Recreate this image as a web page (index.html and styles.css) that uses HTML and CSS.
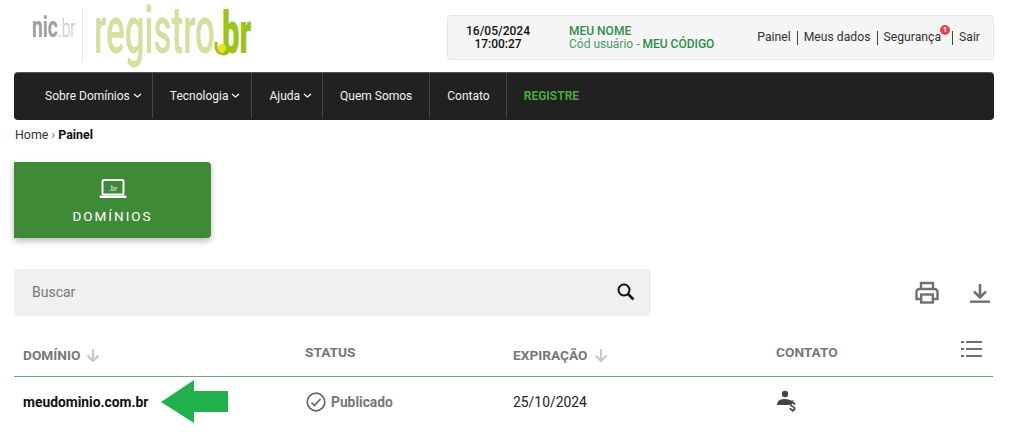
FILE: index.html
```html
<!DOCTYPE html>
<html lang="pt-BR">
<head>
<meta charset="utf-8">
<title>Registro.br - Painel</title>
<link rel="stylesheet" href="styles.css">
</head>
<body>
<div class="page">
  <header class="top">
    <svg class="logo" width="224" height="58" viewBox="0 0 224 58" aria-label="nic.br registro.br">
      <text class="logo-nic" transform="translate(2 31) scale(.66 1)">nic</text>
      <text class="logo-nicbr" transform="translate(28 31) scale(.62 1)">.br</text>
      <rect x="52" y="3" width="1" height="53" fill="#e4e4e4"/>
      <text class="logo-reg" transform="translate(64 47) scale(.53 1)">registro</text>
      <text class="logo-br" transform="translate(192 47) scale(.52 1)">br</text>
      <path d="M186 36v5a7 7 0 0 0 7 7 7 7 0 0 0 6-3" fill="none" stroke="#9bc31c" stroke-width="3"/>
      <circle cx="192" cy="42" r="4" fill="#f0e020"/>
    </svg>
    <div class="userbox">
      <div class="clock">16/05/2024<br>17:00:27</div>
      <div class="who">
        <div class="who-name">MEU NOME</div>
        <div class="who-code">Cód usuário - <b>MEU CÓDIGO</b></div>
      </div>
      <div class="links">
        <a>Painel</a><i></i><a>Meus dados</a><i></i><a class="sec">Segurança<span class="badge">1</span></a><i></i><a>Sair</a>
      </div>
    </div>
  </header>

  <nav class="nav">
    <a class="nav-item has-sub first">Sobre Domínios<svg class="chev" width="9" height="5" viewBox="0 0 9 5"><path d="M1 1l3.500 3L8 1" fill="none" stroke="#fff" stroke-width="1.200"/></svg></a>
    <a class="nav-item has-sub">Tecnologia<svg class="chev" width="9" height="5" viewBox="0 0 9 5"><path d="M1 1l3.500 3L8 1" fill="none" stroke="#fff" stroke-width="1.200"/></svg></a>
    <a class="nav-item has-sub tight">Ajuda<svg class="chev" width="9" height="5" viewBox="0 0 9 5"><path d="M1 1l3.500 3L8 1" fill="none" stroke="#fff" stroke-width="1.200"/></svg></a>
    <a class="nav-item">Quem Somos</a>
    <a class="nav-item tight-end">Contato</a>
    <a class="nav-item last">REGISTRE</a>
  </nav>

  <div class="crumbs">Home <span class="sep">›</span> <b>Painel</b></div>

  <a class="card">
    <svg width="28" height="20" viewBox="0 0 28 20">
      <rect x="3.500" y="1" width="21" height="14.500" rx="1.500" fill="none" stroke="#fff" stroke-width="2"/>
      <rect x="0.500" y="16.500" width="27" height="2.500" rx="1" fill="#fff"/>
      <text class="card-br" x="14" y="11.500" text-anchor="middle">.br</text>
    </svg>
    <span class="card-label">DOMÍNIOS</span>
  </a>

  <div class="tools">
    <div class="search">
      <span>Buscar</span>
      <svg width="20" height="20" viewBox="0 0 20 20"><circle cx="8" cy="8" r="5.500" fill="none" stroke="#111" stroke-width="2"/><path d="M12 12l5.500 5.500" stroke="#111" stroke-width="2.600"/></svg>
    </div>
    <div class="tool-icons">
      <svg width="24" height="24" viewBox="0 0 24 24"><path d="M6 8V2h12v6M6 18H1.500v-7a3 3 0 0 1 3-3h15a3 3 0 0 1 3 3v7H18" fill="none" stroke="#707070" stroke-width="2.400"/><rect x="6.200" y="13.500" width="11.600" height="8" fill="none" stroke="#707070" stroke-width="2.400"/><circle cx="19" cy="11" r="1" fill="#fff"/></svg>
      <svg width="20" height="24" viewBox="0 0 20 24"><path d="M10 3v13M4 10.500l6 6 6-6" fill="none" stroke="#707070" stroke-width="2.600"/><rect x="0" y="19.500" width="20" height="2.400" fill="#707070"/></svg>
    </div>
  </div>

  <div class="thead">
    <div class="th low">DOMÍNIO<svg class="sort" width="14" height="15" viewBox="0 0 14 15"><path d="M7 1v12M1.500 7.500L7 13l5.500-5.500" fill="none" stroke="#c8c8c8" stroke-width="2.200"/></svg></div>
    <div class="th">STATUS</div>
    <div class="th low">EXPIRAÇÃO<svg class="sort" width="14" height="15" viewBox="0 0 14 15"><path d="M7 1v12M1.500 7.500L7 13l5.500-5.500" fill="none" stroke="#c8c8c8" stroke-width="2.200"/></svg></div>
    <div class="th th-last">CONTATO
      <svg class="cols" width="21" height="17" viewBox="0 0 21 17"><g fill="#707070"><rect x="0" y="0" width="3" height="2"/><rect x="5" y="0" width="16" height="2"/><rect x="0" y="7" width="3" height="2"/><rect x="5" y="7" width="16" height="2"/><rect x="0" y="14" width="3" height="2"/><rect x="5" y="14" width="16" height="2"/></g></svg>
    </div>
  </div>

  <div class="trow">
    <div class="domain">meudominio.com.br
      <svg class="arrow" width="67" height="43" viewBox="0 0 67 43"><path d="M0 22L33 0v11h34v21H33v11z" fill="#22b14c"/></svg>
    </div>
    <div class="status">
      <svg width="20" height="20" viewBox="0 0 20 20"><circle cx="10" cy="10" r="8.800" fill="none" stroke="#666" stroke-width="1.700"/><path d="M5.500 10.500l3 3 6-6.500" fill="none" stroke="#666" stroke-width="1.700"/></svg>
      Publicado
    </div>
    <div class="date">25/10/2024</div>
    <div class="contact">
      <svg width="22" height="24" viewBox="0 0 22 24"><circle cx="8" cy="4" r="3.200" fill="#444"/><path d="M0 15c0-4 3-6 8-6 3 0 6 .8 8 3l-4 3z" fill="#444"/><text class="dollar" x="12" y="21">$</text></svg>
    </div>
  </div>
</div>
</body>
</html>
```

FILE: styles.css
```css
* { box-sizing: border-box; }
html, body { margin: 0; height: 447px; overflow: hidden; background: #fff; }
body { font-family: Roboto, "Liberation Sans", sans-serif; color: #222; }

.page { padding: 0 30px 0 14px; }

.top { display: flex; justify-content: space-between; align-items: flex-start; height: 72px; }
.logo { margin: 6px 0 0 16px; display: block; overflow: visible; }
.logo-nic { font: 700 29px Roboto, sans-serif; fill: #a0a0a0; }
.logo-nicbr { font: 300 25px Roboto, sans-serif; fill: #c4c4c4; }
.logo-reg { font: 500 66px Roboto, sans-serif; fill: #d3e09f; }
.logo-br { font: 900 60px Roboto, sans-serif; fill: #9bc31c; }

.userbox {
  width: 547px; height: 45px; margin-top: 15px;
  display: flex; align-items: center;
  background: #f5f5f5; border: 1px solid #e6e6e6; border-radius: 4px;
  font-size: 12px; line-height: 13px;
}
.clock { width: 100px; margin-right: 21px; text-align: center; font-weight: 500; color: #111; }
.who-name { font-weight: 500; color: #2f8a4c; }
.who-code { color: #4c9a66; }
.who-code b { font-weight: 500; color: #2f8a4c; }
.links { margin-left: auto; padding-right: 13px; display: flex; align-items: center; color: #333; font-size: 12.2px; }
.links i { width: 1px; height: 14px; background: #444; margin: 0 6px; }
.sec { position: relative; margin-right: 5px; }
.badge {
  position: absolute; right: -9px; top: -6px;
  width: 10px; height: 10px; border-radius: 50%;
  background: #e5484d; color: #fff; font-size: 7px; font-weight: 700; line-height: 10px; text-align: center;
}

.nav {
  height: 48px; width: 980px; display: flex; align-items: stretch; padding-bottom: 2px;
  background: #212121; border-radius: 4px; border-top: 1px solid #555;
  font-size: 12px; color: #f2f2f2;
}
.nav-item { display: flex; align-items: center; padding: 0 17px; border-right: 1px solid #444; }
.nav-item.has-sub { padding-right: 11px; }
.nav-item.first { padding-left: 31px; padding-right: 10px; }
.nav-item.tight { padding-right: 10px; }
.nav-item.tight-end { padding-right: 16px; }
.nav-item.last { border-right: 0; color: #4aa83e; font-weight: 700; }
.chev { margin-left: 3px; }

.crumbs { height: 42px; padding: 7px 0 0 1px; font-size: 12.400px; line-height: 15px; color: #333; }
.crumbs b { font-weight: 700; color: #111; }
.sep { color: #777; }

.card {
  width: 197px; height: 76px; display: flex; flex-direction: column; align-items: center; padding-top: 17px;
  background: #3f8a36; border-radius: 0 4px 4px 0;
  box-shadow: 0 3px 6px rgba(0,0,0,.28);
  color: #fff;
}
.card-br { font: 700 7px Roboto, sans-serif; fill: #c7dcc4; }
.card-label { margin-top: 10px; font-size: 13.500px; letter-spacing: 2px; line-height: 15px; }

.tools { display: flex; justify-content: space-between; align-items: center; margin-top: 31px; }
.search {
  width: 637px; height: 47px; padding: 0 15px 2px 18px;
  display: flex; justify-content: space-between; align-items: center;
  background: #f0f0f0; border-radius: 4px; font-size: 14px; color: #777;
}
.tool-icons { display: flex; gap: 31px; padding-right: 4px; }

.thead, .trow { display: grid; grid-template-columns: 282px 208px 263px 1fr; width: 979px; padding-left: 9px; }
.thead { height: 61px; border-bottom: 1px solid #66b06f; align-items: center; }
.th { font-size: 13.700px; font-weight: 700; color: #777; display: flex; align-items: center; margin-top: 12px; }
.th.low { margin-top: 18px; }
.th-last { justify-content: space-between; padding-right: 11px; }
.cols { margin-bottom: 5px; }
.sort { margin-left: 6px; }

.trow { height: 50px; align-items: center; }
.domain { position: relative; font-size: 13.800px; font-weight: 700; color: #111; }
.arrow { position: absolute; left: 138px; top: -14px; }
.status { display: flex; align-items: center; gap: 5px; padding-left: 1px; font-size: 13.800px; font-weight: 700; color: #777; }
.date { font-size: 13.900px; color: #222; }
.contact { display: flex; padding-left: 1px; }
.dollar { font: 700 12px Roboto, sans-serif; fill: #444; }
```
